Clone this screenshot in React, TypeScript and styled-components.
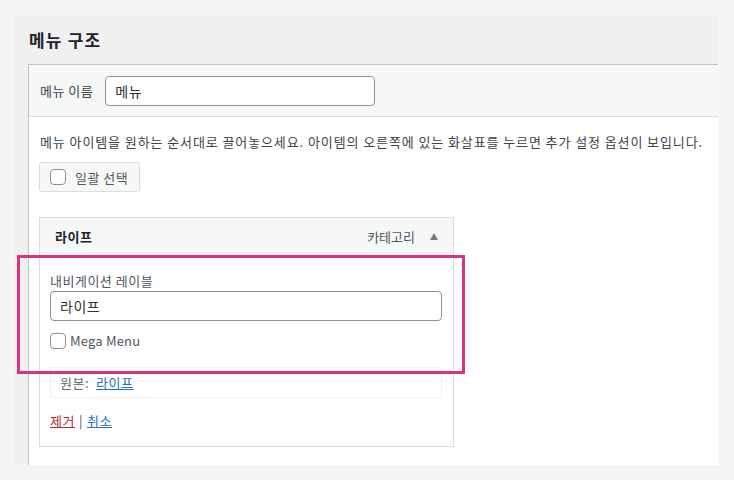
import React from 'react';
import styled, {createGlobalStyle} from "styled-components";

const GlobalStyle = createGlobalStyle`
    html, body {
      margin: 0;
      padding: 0;
      background: #f5f5f5;
    }
    body {
      font-family: "Noto Sans CJK KR", "Noto Sans", sans-serif;
      font-size: 13px;
      letter-spacing: 0.5px;
      color: #3c434a;
    }
`

const Page = styled.div`
    padding: 15px 16px 15px 15px;
`

const Panel = styled.div`
    background: #f0f0f1;
    height: 450px;
    padding-left: 13px;
    display: flex;
    flex-direction: column;
`

const PanelTitle = styled.h2`
    margin: 0;
    height: 49px;
    display: flex;
    align-items: center;
    padding-left: 1px;
    font-size: 17px;
    font-weight: 700;
    letter-spacing: 1.2px;
    color: #1d2327;
`

const MenuBox = styled.div`
    flex: 1;
    border-top: 1px solid #c3c4c7;
    border-left: 1px solid #c3c4c7;
    background: #fff;
    display: flex;
    flex-direction: column;
`

const NameRow = styled.div`
    height: 51px;
    background: #f6f7f7;
    border-bottom: 1px solid #dcdcde;
    display: flex;
    align-items: center;
    gap: 12px;
    padding-left: 11px;
`

const Label = styled.label`
    font-size: 13px;
    color: #3c434a;
`

const TextInput = styled.div<{ $width?: number }>`
    box-sizing: border-box;
    width: ${p => p.$width ? `${p.$width}px` : '100%'};
    height: 30px;
    border: 1px solid #8c8f94;
    border-radius: 4px;
    background: #fff;
    padding: 0 9px;
    display: flex;
    align-items: center;
    font-size: 14px;
    color: #2c3338;
`

const Body = styled.div`
    padding: 14px 0 0 10px;
    display: flex;
    flex-direction: column;
    align-items: flex-start;
`

const Hint = styled.p`
    margin: 0 0 0 1px;
    line-height: 22px;
    font-size: 13px;
    letter-spacing: 0.9px;
    color: #3c434a;
`

const BulkButton = styled.div`
    margin-top: 9px;
    box-sizing: border-box;
    width: 101px;
    height: 30px;
    border: 1px solid #dcdcde;
    border-radius: 3px;
    background: #f6f7f7;
    display: flex;
    align-items: center;
    gap: 9px;
    padding-left: 10px;
    font-size: 13px;
    color: #50575e;
`

const Check = styled.span`
    box-sizing: border-box;
    width: 16px;
    height: 16px;
    border: 1px solid #8c8f94;
    border-radius: 4px;
    background: #fff;
    flex-shrink: 0;
`

const Card = styled.div`
    position: relative;
    margin-top: 25px;
    box-sizing: border-box;
    width: 415px;
    border: 1px solid #dcdcde;
    background: #fff;
`

const CardHead = styled.div`
    height: 37px;
    background: #f6f7f7;
    display: flex;
    align-items: center;
    padding: 0 15px;
`

const CardTitle = styled.span`
    font-weight: 700;
    font-size: 13px;
    color: #1d2327;
    flex: 1;
`

const CardType = styled.span`
    font-size: 13px;
    letter-spacing: 0;
    color: #50575e;
`

const Arrow = styled.span`
    margin-left: 15px;
    width: 0;
    height: 0;
    border-left: 4px solid transparent;
    border-right: 4px solid transparent;
    border-bottom: 7px solid #787c82;
`

const Settings = styled.div`
    padding: 16px 11px 0 10px;
    display: flex;
    flex-direction: column;
`

const FieldLabel = styled.div`
    line-height: 20px;
    font-size: 13px;
    color: #50575e;
`

const CheckRow = styled.div`
    margin-top: 10px;
    display: flex;
    align-items: center;
    gap: 4px;
    font-size: 13px;
    letter-spacing: 0.2px;
    color: #50575e;
`

const OriginBox = styled.div`
    margin-top: 17px;
    height: 29px;
    border: 1px solid #f0f0f1;
    display: flex;
    align-items: center;
    gap: 7px;
    padding-left: 9px;
    font-size: 13px;
    color: #646970;
`

const Link = styled.a<{ $danger?: boolean }>`
    color: ${p => p.$danger ? '#b32d2e' : '#2271b1'};
    text-decoration: underline;
`

const Actions = styled.div`
    margin: 13px 0 15px;
    line-height: 20px;
    font-size: 13px;
    color: #50575e;
    display: flex;
    gap: 4px;
`

const Highlight = styled.div`
    position: absolute;
    left: -23px;
    top: 37px;
    width: 448px;
    height: 119px;
    box-sizing: border-box;
    border: 3px solid #d63384;
    pointer-events: none;
`

const App = () => {
    return (
        <Page>
            <GlobalStyle/>
            <Panel>
                <PanelTitle>메뉴 구조</PanelTitle>
                <MenuBox>
                    <NameRow>
                        <Label>메뉴 이름</Label>
                        <TextInput $width={270}>메뉴</TextInput>
                    </NameRow>
                    <Body>
                        <Hint>메뉴 아이템을 원하는 순서대로 끌어놓으세요. 아이템의 오른쪽에 있는 화살표를 누르면 추가 설정 옵션이 보입니다.</Hint>
                        <BulkButton>
                            <Check/>
                            일괄 선택
                        </BulkButton>
                        <Card>
                            <CardHead>
                                <CardTitle>라이프</CardTitle>
                                <CardType>카테고리</CardType>
                                <Arrow/>
                            </CardHead>
                            <Settings>
                                <FieldLabel>내비게이션 레이블</FieldLabel>
                                <TextInput>라이프</TextInput>
                                <CheckRow>
                                    <Check/>
                                    Mega Menu
                                </CheckRow>
                                <OriginBox>
                                    원본: <Link>라이프</Link>
                                </OriginBox>
                                <Actions>
                                    <Link $danger>제거</Link>|<Link>취소</Link>
                                </Actions>
                            </Settings>
                            <Highlight/>
                        </Card>
                    </Body>
                </MenuBox>
            </Panel>
        </Page>
    );
};

export default App;
